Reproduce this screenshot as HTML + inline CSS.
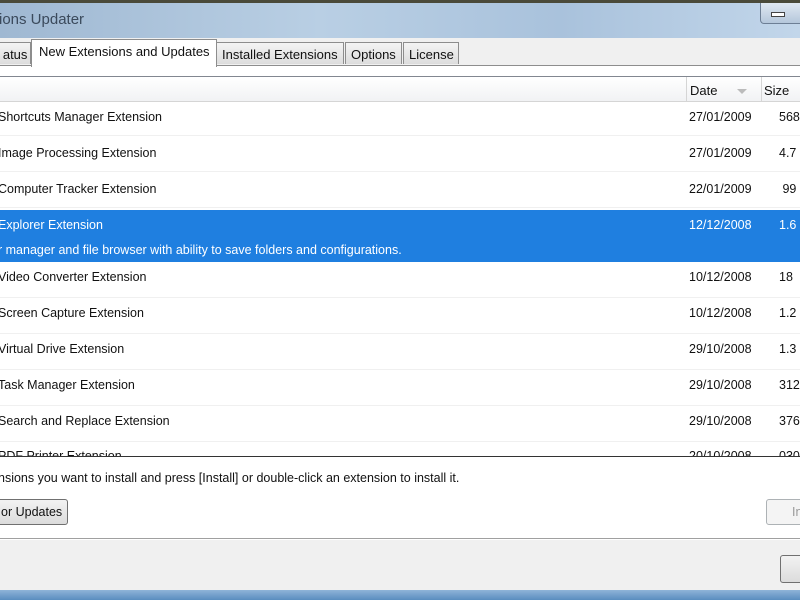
<!DOCTYPE html>
<html><head><style>
body{margin:0;width:800px;height:600px;overflow:hidden;position:relative;background:#f0f0f0;font-family:"Liberation Sans",sans-serif;font-size:12.5px;color:#111}
.abs{position:absolute}
.title{left:0;top:0;width:800px;height:38px;background:linear-gradient(90deg,#9fb8d2,#b9cfe4 40%,#a9c2dc 70%,#c2d6ea);}
.title span{position:absolute;left:-1px;top:8px;font-size:15px;color:#3b4a5c}
.tab{position:absolute;top:42px;height:22px;background:linear-gradient(#f4f4f4,#dcdcdc);border:1px solid #8d8d8d;border-bottom:none;font-size:13px;line-height:23px;padding:0 5px;box-sizing:border-box}
.row{position:absolute;left:0;width:800px;height:36px;border-bottom:1px solid #f0f0f0;box-sizing:border-box}
.row .n{position:absolute;left:-2px;top:10px}
.row .d{position:absolute;left:689px;top:10px}
.row .s{position:absolute;left:779px;top:10px}
</style></head><body>
<div class="abs" style="left:0;top:0;width:800px;height:3px;background:#4a4a3a"></div>
<div class="abs title" style="top:3px;height:35px"><span>ions Updater</span></div>
<div class="abs" style="left:760px;top:3px;width:40px;height:20px;border:1px solid #6d7f95;border-top:none;border-radius:0 0 0 4px;background:linear-gradient(#dfe8f2,#b5c7db)"><div style="position:absolute;left:10px;top:9px;width:12px;height:3px;border:1px solid #444;background:#fff"></div></div>
<div class="abs" style="left:0;top:38px;width:800px;height:28px;background:#f0f0f0"></div>
<div class="tab" style="left:-14px;width:45px">&nbsp;&nbsp;&nbsp;atus</div>
<div class="tab" style="left:31px;top:39px;height:28px;background:#fff;z-index:2;width:186px;padding-left:7px;line-height:24px">New Extensions and Updates</div>
<div class="tab" style="left:216px;width:128px">Installed Extensions</div>
<div class="tab" style="left:345px;width:57px">Options</div>
<div class="tab" style="left:403px;width:56px">License</div>
<div class="abs" style="left:0;top:65px;width:800px;height:474px;background:#fff;border-top:1px solid #8d8d8d"></div>
<div class="abs" style="left:0;top:76px;width:800px;height:1px;background:#828790"></div>
<div class="abs" style="left:0;top:77px;width:800px;height:24px;background:linear-gradient(#fff,#f1f2f4);border-bottom:1px solid #d5d5d5"></div>
<div class="abs" style="left:686px;top:77px;width:1px;height:24px;background:#d5d5d5"></div>
<div class="abs" style="left:761px;top:77px;width:1px;height:24px;background:#d5d5d5"></div>
<div class="abs" style="left:690px;top:83px;font-size:13px">Date</div>
<div class="abs" style="left:737px;top:89px;width:0;height:0;border-left:5px solid transparent;border-right:5px solid transparent;border-top:5px solid #bbb"></div>
<div class="abs" style="left:764px;top:83px;font-size:13px">Size</div>
<div class="row" style="top:100px"><span class="n">Shortcuts Manager Extension</span><span class="d">27/01/2009</span><span class="s">568</span></div>
<div class="row" style="top:136px"><span class="n">Image Processing Extension</span><span class="d">27/01/2009</span><span class="s">4.7</span></div>
<div class="row" style="top:172px"><span class="n">Computer Tracker Extension</span><span class="d">22/01/2009</span><span class="s">&nbsp;99</span></div>
<div class="abs" style="left:0;top:210px;width:800px;height:52px;background:#1f7fe0;color:#fff">
<span class="abs" style="left:-2px;top:8px">Explorer Extension</span>
<span class="abs" style="left:689px;top:8px">12/12/2008</span>
<span class="abs" style="left:779px;top:8px">1.6</span>
<span class="abs" style="left:-2px;top:33px">r manager and file browser with ability to save folders and configurations.</span></div>
<div class="row" style="top:262px"><span class="n" style="top:8px">Video Converter Extension</span><span class="d" style="top:8px">10/12/2008</span><span class="s" style="top:8px">18</span></div>
<div class="row" style="top:298px"><span class="n" style="top:8px">Screen Capture Extension</span><span class="d" style="top:8px">10/12/2008</span><span class="s" style="top:8px">1.2</span></div>
<div class="row" style="top:334px"><span class="n" style="top:8px">Virtual Drive Extension</span><span class="d" style="top:8px">29/10/2008</span><span class="s" style="top:8px">1.3</span></div>
<div class="row" style="top:370px"><span class="n" style="top:8px">Task Manager Extension</span><span class="d" style="top:8px">29/10/2008</span><span class="s" style="top:8px">312</span></div>
<div class="row" style="top:406px"><span class="n" style="top:8px">Search and Replace Extension</span><span class="d" style="top:8px">29/10/2008</span><span class="s" style="top:8px">376</span></div>
<div class="abs" style="left:0;top:442px;width:800px;height:14px;overflow:hidden"><span class="abs" style="left:-2px;top:7px">PDF Printer Extension</span><span class="abs" style="left:689px;top:7px">20/10/2008</span><span class="abs" style="left:779px;top:7px">030</span></div>
<div class="abs" style="left:0;top:456px;width:800px;height:1px;background:#333"></div>
<div class="abs" style="left:-2px;top:471px">nsions you want to install and press [Install] or double-click an extension to install it.</div>
<div class="abs" style="left:-6px;top:499px;width:74px;height:26px;border:1px solid #707070;border-radius:3px;background:linear-gradient(#f2f2f2,#dcdcdc);box-sizing:border-box;line-height:25px;padding-left:6px">or Updates</div>
<div class="abs" style="left:766px;top:499px;width:40px;height:26px;border:1px solid #adb2b5;border-radius:3px;background:#f4f4f4;box-sizing:border-box;line-height:25px;padding-left:25px;color:#999">In</div>
<div class="abs" style="left:0;top:538px;width:800px;height:1px;background:#a0a0a0"></div>
<div class="abs" style="left:780px;top:555px;width:30px;height:26px;border:1px solid #707070;border-radius:3px;background:linear-gradient(#f2f2f2,#dcdcdc)"></div>
<div class="abs" style="left:0;top:590px;width:800px;height:10px;background:linear-gradient(#8fb4d8,#5a8dbf)"></div>
</body></html>
